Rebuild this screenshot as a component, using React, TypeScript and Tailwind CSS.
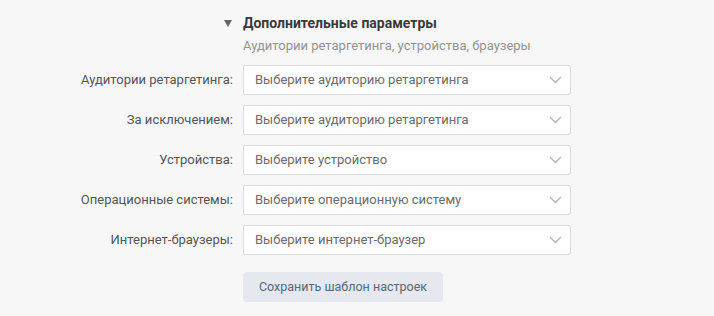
import React from 'react';

const rows = [
  { label: 'Аудитории ретаргетинга:', placeholder: 'Выберите аудиторию ретаргетинга' },
  { label: 'За исключением:', placeholder: 'Выберите аудиторию ретаргетинга' },
  { label: 'Устройства:', placeholder: 'Выберите устройство' },
  { label: 'Операционные системы:', placeholder: 'Выберите операционную систему' },
  { label: 'Интернет-браузеры:', placeholder: 'Выберите интернет-браузер' },
];

const Chevron = () => (
  <svg width="13" height="8" viewBox="0 0 13 8" fill="none" className="shrink-0">
    <path d="M1 1l5.5 5.5L12 1" stroke="#b3b3b3" strokeWidth="1.3" />
  </svg>
);

const App: React.FC = () => {
  return (
    <div
      className="w-[714px] h-[316px] bg-[#f7f7f7] pt-[14px] text-[13px] overflow-hidden"
      style={{ fontFamily: 'Roboto, "Noto Sans", sans-serif' }}
    >
      <div className="flex gap-[10px]">
        <div className="w-[233px] flex justify-end pt-[6px] pr-[1px]">
          <svg width="8" height="7" viewBox="0 0 8 7">
            <path d="M0 0h8L4 7z" fill="#666" />
          </svg>
        </div>
        <div>
          <div className="font-bold text-[14px] text-[#3a3a3a] leading-[18px]">Дополнительные параметры</div>
          <div className="text-[#939393] leading-[18px] mt-[5px]">Аудитории ретаргетинга, устройства, браузеры</div>
        </div>
      </div>

      <div className="flex flex-col gap-[10px] mt-[10px]">
        {rows.map((r) => (
          <div key={r.label} className="flex items-center gap-[10px]">
            <div className="w-[233px] text-right text-[#555]">{r.label}</div>
            <div className="w-[328px] h-[30px] bg-white border border-[#dcdcdc] rounded-[2px] flex items-center justify-between pl-[11px] pr-[8px]">
              <span className="text-[#6b6b6b]">{r.placeholder}</span>
              <Chevron />
            </div>
          </div>
        ))}
      </div>

      <div className="ml-[243px] mt-[17px]">
        <button className="w-[200px] h-[30px] bg-[#e5e8ee] rounded-[4px] text-[12.5px] text-[#55677d]">
          Сохранить шаблон настроек
        </button>
      </div>
    </div>
  );
};

export default App;
